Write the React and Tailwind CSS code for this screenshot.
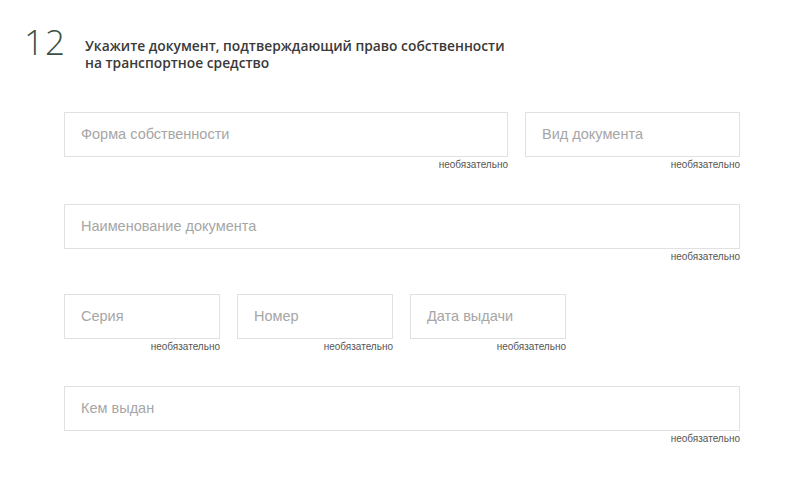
import React from 'react';

function Field({ placeholder, className = '' }) {
    return (
        <div className={`flex flex-col ${className}`}>
            <div className="h-[45px] border border-[#e1e1e1] bg-white flex items-center px-4">
                <span className="text-[14.5px] text-[#a6a6a6]">{placeholder}</span>
            </div>
            <div className="h-[14px] mt-[1px] text-right text-[10px] leading-[14px] text-[#555]">необязательно</div>
        </div>
    );
}

export default function App() {
    return (
        <div className="w-[800px] h-[485px] bg-white font-['Liberation_Sans',Arial,sans-serif] overflow-hidden">
            <div className="flex items-start pt-[24px] pl-[24px]">
                <div className="w-[61px] text-[35px] leading-[36px] font-light text-[#3d5046] font-['Open_Sans',sans-serif] tracking-[1px]">
                    12
                </div>
                <h1 className="pt-[13px] text-[13.8px] leading-[17px] font-semibold text-[#3a3a3a] font-['Open_Sans',sans-serif]">
                    Укажите документ, подтверждающий право собственности
                    <br />
                    на транспортное средство
                </h1>
            </div>

            <div className="ml-[64px] w-[676px] mt-[41px] flex flex-col">
                <div className="flex gap-[17px]">
                    <Field placeholder="Форма собственности" className="w-[444px]" />
                    <Field placeholder="Вид документа" className="flex-1" />
                </div>
                <Field placeholder="Наименование документа" className="mt-[32px]" />
                <div className="flex gap-[17px] mt-[30px]">
                    <Field placeholder="Серия" className="w-[156px]" />
                    <Field placeholder="Номер" className="w-[156px]" />
                    <Field placeholder="Дата выдачи" className="w-[156px]" />
                </div>
                <Field placeholder="Кем выдан" className="mt-[32px]" />
            </div>
        </div>
    );
}
